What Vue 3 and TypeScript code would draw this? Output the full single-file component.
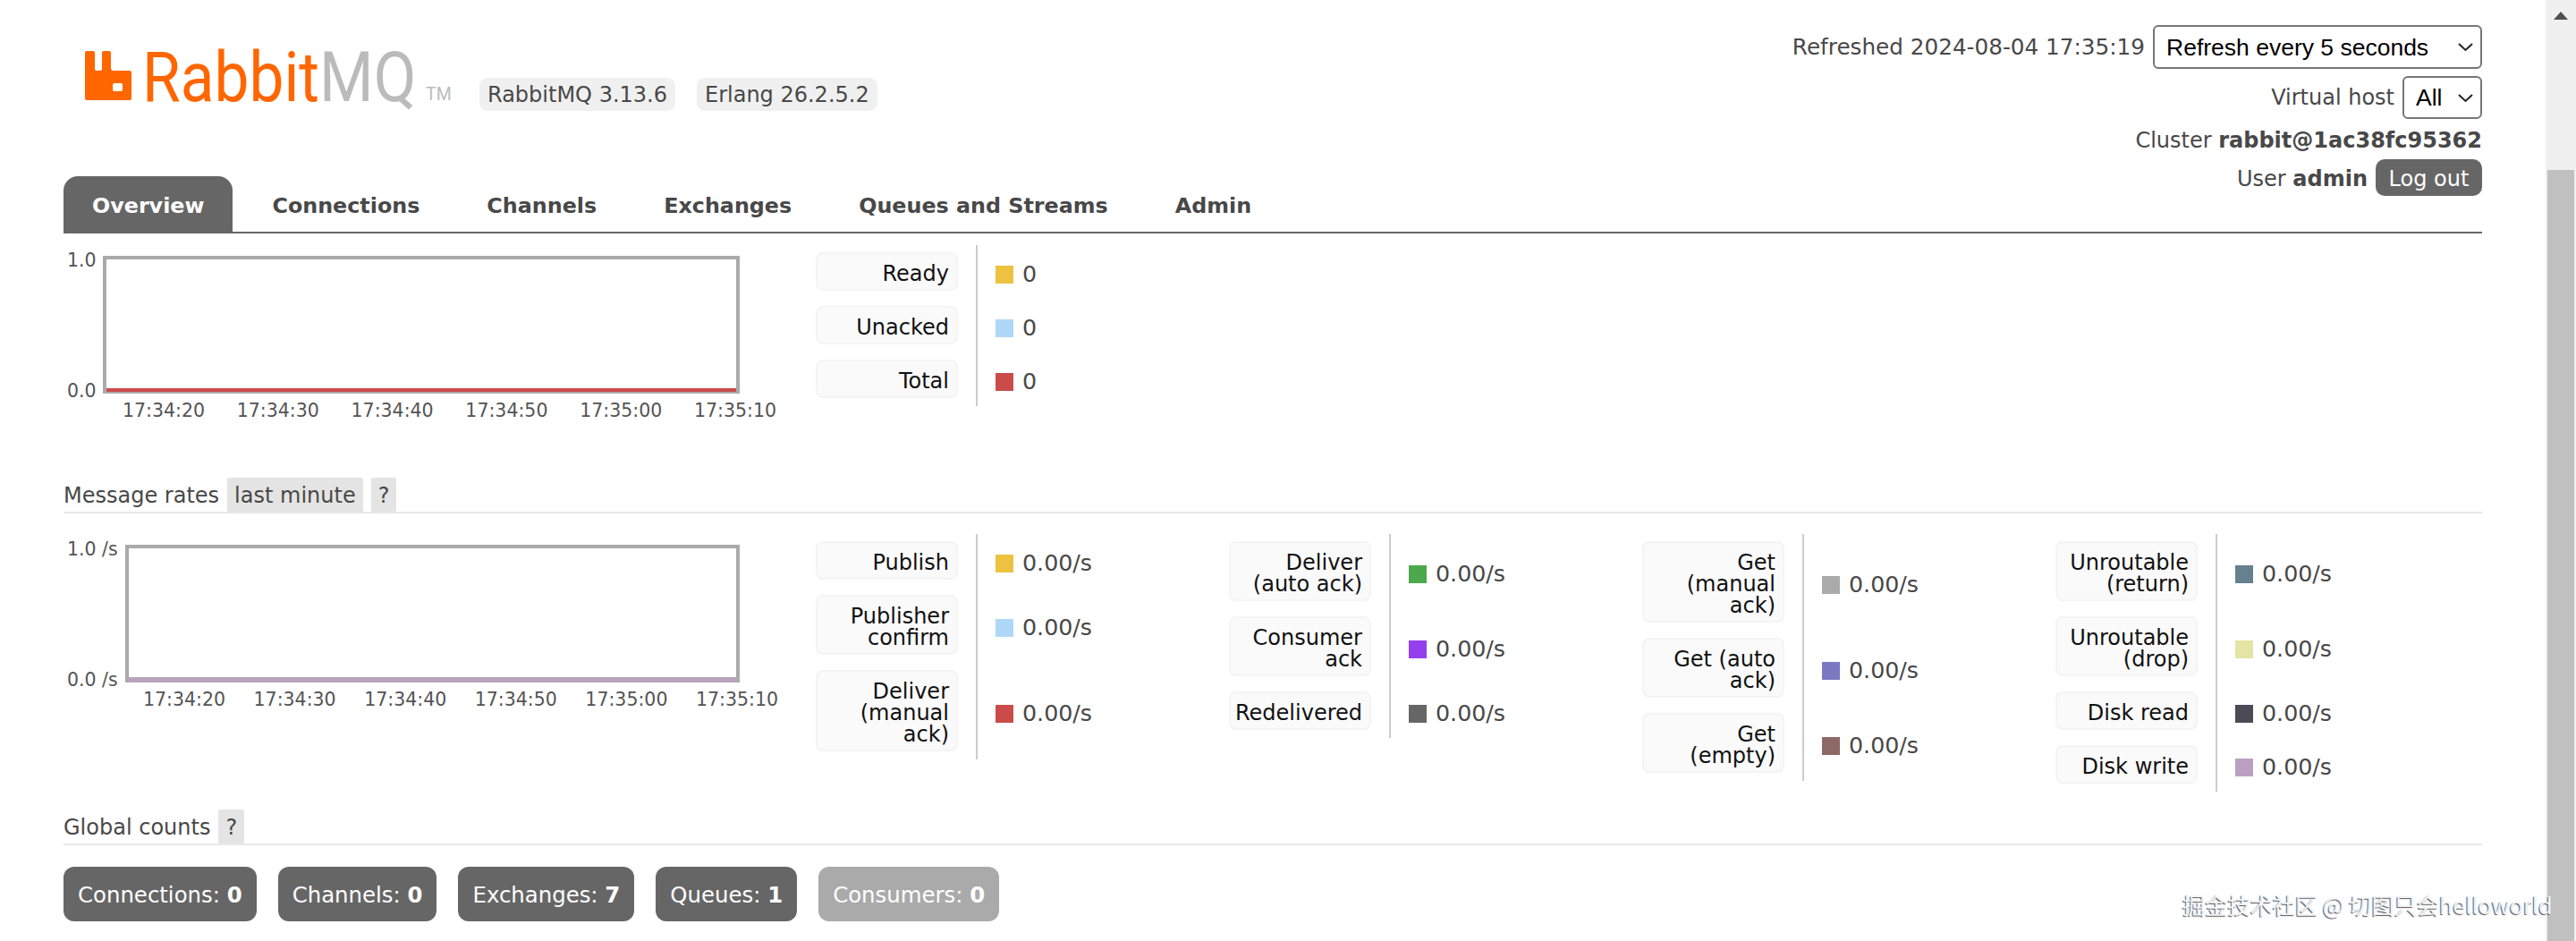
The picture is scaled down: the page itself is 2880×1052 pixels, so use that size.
<script setup lang="ts">
interface LegendItem {
  label: string
  color: string
  value: string
}

const tabs = ['Overview', 'Connections', 'Channels', 'Exchanges', 'Queues and Streams', 'Admin']
const times = ['17:34:20', '17:34:30', '17:34:40', '17:34:50', '17:35:00', '17:35:10']

const queued: LegendItem[] = [
  { label: 'Ready', color: '#edc240', value: '0' },
  { label: 'Unacked', color: '#afd8f8', value: '0' },
  { label: 'Total', color: '#cb4b4b', value: '0' },
]

const rates: LegendItem[][] = [
  [
    { label: 'Publish', color: '#edc240', value: '0.00/s' },
    { label: 'Publisher\nconfirm', color: '#afd8f8', value: '0.00/s' },
    { label: 'Deliver\n(manual\nack)', color: '#cb4b4b', value: '0.00/s' },
  ],
  [
    { label: 'Deliver\n(auto ack)', color: '#4da74d', value: '0.00/s' },
    { label: 'Consumer\nack', color: '#9440ed', value: '0.00/s' },
    { label: 'Redelivered', color: '#666666', value: '0.00/s' },
  ],
  [
    { label: 'Get\n(manual\nack)', color: '#aaaaaa', value: '0.00/s' },
    { label: 'Get (auto\nack)', color: '#7c79c3', value: '0.00/s' },
    { label: 'Get\n(empty)', color: '#8e6767', value: '0.00/s' },
  ],
  [
    { label: 'Unroutable\n(return)', color: '#67808e', value: '0.00/s' },
    { label: 'Unroutable\n(drop)', color: '#e4e4a4', value: '0.00/s' },
    { label: 'Disk read', color: '#4b4a55', value: '0.00/s' },
    { label: 'Disk write', color: '#bba0c1', value: '0.00/s' },
  ],
]

const counts = [
  { label: 'Connections', value: 0, idle: false },
  { label: 'Channels', value: 0, idle: false },
  { label: 'Exchanges', value: 7, idle: false },
  { label: 'Queues', value: 1, idle: false },
  { label: 'Consumers', value: 0, idle: true },
]

// tick centres, measured from the left edge of the chart block
function tickLeft(start: number, step: number, i: number) {
  return start + step * i + 'px'
}
</script>

<template>
  <div class="page">
    <main class="content">
      <header class="header">
        <div class="brand">
          <svg class="logo" width="409" height="60" viewBox="0 0 409 60">
            <path
              fill="#ff6600"
              fill-rule="evenodd"
              d="M2 0H9a2 2 0 0 1 2 2V20a2 2 0 0 0 2 2h4a2 2 0 0 0 2-2V2a2 2 0 0 1 2-2h6a2 2 0 0 1 2 2V19a3 3 0 0 0 3 3H50a2 2 0 0 1 2 2V53a2 2 0 0 1-2 2H2a2 2 0 0 1-2-2V2a2 2 0 0 1 2-2ZM33 36h7a2 2 0 0 1 2 2v5a2 2 0 0 1-2 2h-7a2 2 0 0 1-2-2v-5a2 2 0 0 1 2-2Z"
            />
            <text class="logo-word" transform="translate(64 55.5) scale(0.89 1)"><tspan fill="#ff6600">Rabbit</tspan><tspan fill="#bbbbbb">MQ</tspan></text>
            <text class="logo-tm" x="381" y="55" fill="#bbbbbb">TM</text>
          </svg>
          <span class="version">RabbitMQ 3.13.6</span>
          <span class="version">Erlang 26.2.5.2</span>
        </div>
        <div class="status">
          <div class="status-row">
            <span class="refreshed">Refreshed 2024-08-04 17:35:19</span>
            <span class="select-wrap">
              <select class="select select-refresh">
                <option>Refresh every 5 seconds</option>
              </select>
              <svg class="chevron" width="19" height="11" viewBox="0 0 19 11">
                <path d="M2 2l7.5 7L17 2" fill="none" stroke="#222" stroke-width="2" />
              </svg>
            </span>
          </div>
          <div class="status-row vhost-row">
            <span class="vhost-label">Virtual host</span>
            <span class="select-wrap">
              <select class="select select-vhost">
                <option>All</option>
              </select>
              <svg class="chevron" width="19" height="11" viewBox="0 0 19 11">
                <path d="M2 2l7.5 7L17 2" fill="none" stroke="#222" stroke-width="2" />
              </svg>
            </span>
          </div>
          <div class="cluster">Cluster <b>rabbit@1ac38fc95362</b></div>
          <div class="status-row user-row">
            <span class="user">User <b>admin</b></span>
            <button class="logout">Log out</button>
          </div>
        </div>
      </header>

      <nav class="tabs">
        <a v-for="(tab, i) in tabs" :key="tab" class="tab" :class="{ active: i === 0 }">{{ tab }}</a>
      </nav>

      <section class="stats queued">
        <div class="chart">
          <div class="plot plot-queued"><div class="plot-line"></div></div>
          <span class="y-tick y-top">1.0</span>
          <span class="y-tick y-bottom">0.0</span>
          <span
            v-for="(t, i) in times"
            :key="t"
            class="x-tick"
            :style="{ left: tickLeft(112, 127.8, i) }"
          >{{ t }}</span>
        </div>
        <div class="legend">
          <div v-for="item in queued" :key="item.label" class="legend-item">
            <div class="legend-label">{{ item.label }}</div>
            <div class="legend-value">
              <i class="swatch" :style="{ background: item.color }"></i>{{ item.value }}
            </div>
          </div>
        </div>
      </section>

      <h2 class="section-head rates-head">
        <span class="head-title">Message rates</span>
        <span class="chip">last minute</span>
        <span class="chip">?</span>
      </h2>

      <section class="stats">
        <div class="chart">
          <div class="plot plot-rates"><div class="plot-line"></div></div>
          <span class="y-tick y-top">1.0 /s</span>
          <span class="y-tick y-bottom">0.0 /s</span>
          <span
            v-for="(t, i) in times"
            :key="t"
            class="x-tick"
            :style="{ left: tickLeft(135, 123.6, i) }"
          >{{ t }}</span>
        </div>
        <div v-for="(col, c) in rates" :key="c" class="legend">
          <div v-for="item in col" :key="item.label" class="legend-item">
            <div class="legend-label">{{ item.label }}</div>
            <div class="legend-value">
              <i class="swatch" :style="{ background: item.color }"></i>{{ item.value }}
            </div>
          </div>
        </div>
      </section>

      <h2 class="section-head global-head">
        <span class="head-title">Global counts</span>
        <span class="chip">?</span>
      </h2>

      <div class="counts">
        <div v-for="c in counts" :key="c.label" class="count" :class="{ idle: c.idle }">
          {{ c.label }}: <b>{{ c.value }}</b>
        </div>
      </div>
    </main>

    <aside class="scrollbar">
      <i class="scroll-arrow"></i>
      <div class="scroll-thumb"></div>
    </aside>

    <div class="watermark">掘金技术社区 @ 切图只会helloworld</div>
  </div>
</template>

<style scoped>
.page {
  position: relative;
  display: flex;
  width: 2880px;
  height: 1052px;
  overflow: hidden;
  background: #fff;
  color: #484848;
  font-family: "DejaVu Sans", Verdana, sans-serif;
  font-size: 24px;
  line-height: 24px;
}
.content {
  flex: 1;
  padding: 0 71px;
  min-width: 0;
}

/* header */
.header {
  display: flex;
  justify-content: space-between;
  height: 197px;
}
.brand {
  display: flex;
  align-items: flex-start;
  padding: 57px 0 0 24px;
}
.logo {
  flex: none;
  margin-right: 32px;
  overflow: visible;
}
.logo-word {
  font-family: Roboto, sans-serif;
  font-weight: 400;
  font-size: 78px;
}
.logo-tm {
  font-family: Roboto, sans-serif;
  font-weight: 400;
  font-size: 19.5px;
}
.version {
  margin: 30px 24px 0 0;
  padding: 7px 9px 6px;
  background: #f0f0f0;
  border-radius: 9px;
  white-space: nowrap;
}
.status {
  display: flex;
  flex-direction: column;
  align-items: flex-end;
  padding-top: 28px;
}
.status-row {
  display: flex;
  align-items: center;
}
.vhost-row {
  margin-top: 8px;
}
.refreshed {
  margin-right: 9px;
  font-size: 24.7px;
}
.vhost-label {
  margin-right: 9px;
}
.select-wrap {
  position: relative;
  display: block;
}
.select {
  display: block;
  appearance: none;
  box-sizing: border-box;
  background: #fff;
  border: 2px solid #767676;
  border-radius: 6px;
  color: #000;
  font-family: "Liberation Sans", Arial, sans-serif;
  font-size: 26.5px;
  padding: 0 0 0 13px;
}
.select-refresh {
  width: 368px;
  height: 49px;
}
.select-vhost {
  width: 89px;
  height: 48px;
}
.chevron {
  position: absolute;
  right: 9px;
  top: 19px;
  pointer-events: none;
}
.cluster {
  margin-top: 12px;
}
.user-row {
  margin-top: 9px;
}
.user {
  margin: 2px 9px 0 0;
}
.logout {
  width: 119px;
  height: 41px;
  padding: 2px 0 0;
  border: 0;
  border-radius: 10px;
  background: #666;
  color: #fff;
  font: inherit;
}

/* tabs */
.tabs {
  display: flex;
  gap: 13px;
  height: 64px;
  border-bottom: 2px solid #666;
  box-sizing: border-box;
  font-size: 23.8px;
}
.tab {
  padding: 21px 31px 0;
  border-radius: 16px 16px 0 0;
  font-weight: 700;
  white-space: nowrap;
}
.tab.active {
  padding: 21px 32px 0;
  background: #666;
  color: #fff;
}

/* chart + legends */
.stats {
  display: flex;
  align-items: flex-start;
  margin-top: 23px;
}
.queued {
  margin-top: 13px;
}
.chart {
  position: relative;
  flex: none;
  width: 841px;
  height: 200px;
}
.plot {
  position: relative;
  box-sizing: border-box;
  height: 154px;
  margin: 12px 0 0 0;
  border: solid #aaa;
  border-width: 4px 4px 2px;
}
.plot-queued {
  margin-left: 44px;
  width: 712px;
}
.plot-rates {
  margin-left: 69px;
  width: 687px;
}
.plot-line {
  position: absolute;
  left: 0;
  right: 0;
  bottom: 0;
  height: 4px;
  background: #cb4b4b;
}
.plot-rates {
  border-bottom-color: #b7a3bd;
}
.plot-rates .plot-line {
  background: #b7a3bd;
}
.y-tick,
.x-tick {
  position: absolute;
  font-size: 20.5px;
  line-height: 24px;
  white-space: nowrap;
  color: #545454;
}
.y-tick {
  left: 4px;
}
.y-top {
  top: 5px;
}
.y-bottom {
  top: 151px;
}
.x-tick {
  top: 173px;
  transform: translateX(-50%);
}
.legend {
  flex: none;
  width: 462px;
}
.legend-item {
  display: flex;
}
.legend-label {
  box-sizing: border-box;
  flex: none;
  width: 159px;
  margin: 8px 20px 9px 0;
  padding: 10px 8px 5px 2px;
  background: #fafafa;
  border: 2px solid #f4f4f4;
  border-radius: 8px;
  color: #111;
  text-align: right;
  white-space: pre-line;
}
.legend-value {
  display: flex;
  align-items: center;
  padding: 5px 0 0 20px;
  border-left: 2px solid #ccc;
  font-size: 25.3px;
  white-space: nowrap;
}
.swatch {
  flex: none;
  width: 20px;
  height: 20px;
  margin-right: 10px;
}

/* section titles */
.section-head {
  display: flex;
  gap: 9px;
  height: 40px;
  margin: 0;
  box-sizing: border-box;
  border-bottom: 2px solid #e8e8e8;
  font-size: inherit;
  font-weight: 400;
}
.rates-head {
  margin-top: 60px;
}
.global-head {
  margin-top: 20px;
}
.head-title {
  padding-top: 8px;
}
.chip {
  padding: 8px 8px 0;
  background: #e4e4e4;
  border-radius: 2px 2px 0 0;
}

/* totals */
.counts {
  display: flex;
  gap: 24px;
  margin-top: 24px;
}
.count {
  height: 61px;
  box-sizing: border-box;
  padding: 20px 16px 0;
  border-radius: 12px;
  background: #666;
  color: #fff;
  font-size: 24.4px;
  white-space: nowrap;
}
.count.idle {
  background: #aaa;
}

/* browser scrollbar */
.scrollbar {
  display: flex;
  flex: none;
  flex-direction: column;
  align-items: center;
  box-sizing: border-box;
  width: 34px;
  padding-top: 13px;
  background: #f0f0f0;
}
.scroll-arrow {
  width: 0;
  height: 0;
  border: solid transparent;
  border-width: 0 8px 9px;
  border-bottom-color: #505050;
}
.scroll-thumb {
  flex: 1;
  width: 30px;
  margin-top: 168px;
  background: #c0c0c0;
}

.watermark {
  position: absolute;
  left: 2440px;
  top: 996px;
  font-family: "Noto Sans CJK SC", "Noto Sans", sans-serif;
  font-size: 25.2px;
  line-height: 30px;
  color: #f4f4f4;
  text-shadow: -1px 1px 1px #555;
  white-space: nowrap;
}
</style>

<style>
body {
  margin: 0;
  overflow: hidden;
}
</style>
